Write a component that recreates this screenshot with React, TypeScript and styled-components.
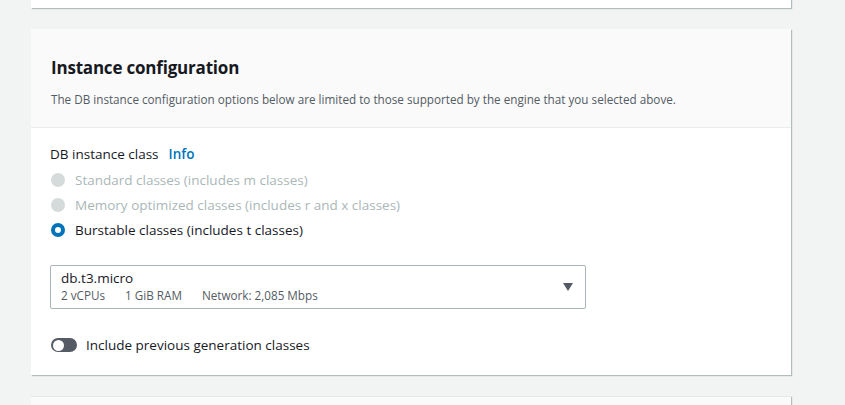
import React from "react";
import styled, { createGlobalStyle } from "styled-components";

const Global = createGlobalStyle`
  html, body { margin: 0; padding: 0; background: #f2f3f3; }
  body { font-family: "Open Sans", "Noto Sans", sans-serif; color: #16191f; }
  * { box-sizing: border-box; }
`;

const Page = styled.div`
  width: 845px;
  height: 415px;
  overflow: hidden;
  display: flex;
  flex-direction: column;
  gap: 21px;
  padding-left: 31px;
  margin-top: -10px;
`;

const Card = styled.div<{ $h?: number }>`
  width: 760px;
  background: #fff;
  box-shadow: 1px 1px 1px 0 rgba(0, 22, 28, 0.25);
  ${(p) => (p.$h ? `height: ${p.$h}px;` : "")}
  flex-shrink: 0;
`;

const NextCard = styled(Card)`
  background: #fafafa;
  border-top: 1px solid #e4e8e8;
  height: 40px;
`;

const Header = styled.div`
  background: #fafafa;
  border-bottom: 1px solid #eaeded;
  padding: 27px 20px 0 20px;
  height: 99px;
`;

const Title = styled.h2`
  margin: 0;
  font-size: 17px;
  font-weight: 700;
  line-height: 24px;
  letter-spacing: -0.2px;
`;

const Desc = styled.p`
  margin: 11px 0 0 0;
  font-size: 11.7px;
  line-height: 16px;
  color: #545b64;
`;

const Body = styled.div`
  padding: 16px 19px 20px 19px;
`;

const Label = styled.div`
  font-size: 13.5px;
  line-height: 20px;
  display: flex;
  gap: 10px;
`;

const Info = styled.span`
  color: #0073bb;
  font-weight: 600;
`;

const RadioList = styled.div`
  display: flex;
  flex-direction: column;
  margin-top: 6px;
  gap: 5px;
`;

const RadioRow = styled.div<{ $disabled?: boolean }>`
  display: flex;
  align-items: center;
  gap: 10px;
  font-size: 13.5px;
  line-height: 20px;
  color: ${(p) => (p.$disabled ? "#aab7b8" : "#16191f")};
`;

const RadioDot = styled.span<{ $state: "disabled" | "checked" }>`
  width: 14px;
  height: 14px;
  margin-left: 1px;
  border-radius: 50%;
  flex-shrink: 0;
  ${(p) =>
    p.$state === "disabled"
      ? "background: #d5dbdb;"
      : "background: #fff; border: 4px solid #0073bb;"}
`;

const Select = styled.div`
  margin-top: 25px;
  width: 536px;
  height: 44px;
  border: 1px solid #aab7b8;
  border-radius: 2px;
  display: flex;
  align-items: center;
  justify-content: space-between;
  padding: 0 12px 0 10px;
`;

const SelectText = styled.div`
  display: flex;
  flex-direction: column;
`;

const SelectMain = styled.div`
  font-size: 13.5px;
  line-height: 17px;
`;

const SelectMeta = styled.div`
  display: flex;
  gap: 20px;
  font-size: 11.7px;
  line-height: 17px;
  color: #545b64;
`;

const Toggle = styled.div`
  margin-top: 26px;
  display: flex;
  align-items: center;
  gap: 9px;
  font-size: 13.5px;
  line-height: 20px;
`;

const Track = styled.span`
  width: 26px;
  height: 14px;
  margin-left: 1px;
  border-radius: 7px;
  background: #545b64;
  display: flex;
  align-items: center;
  padding-left: 1.5px;
`;

const Knob = styled.span`
  width: 11px;
  height: 11px;
  border-radius: 50%;
  background: #fff;
`;

export default function App() {
  return (
    <>
      <Global />
      <Page>
        <Card $h={18} />
        <Card>
          <Header>
            <Title>Instance configuration</Title>
            <Desc>
              The DB instance configuration options below are limited to those supported by the engine that you selected above.
            </Desc>
          </Header>
          <Body>
            <Label>
              DB instance class <Info>Info</Info>
            </Label>
            <RadioList>
              <RadioRow $disabled>
                <RadioDot $state="disabled" />
                Standard classes (includes m classes)
              </RadioRow>
              <RadioRow $disabled>
                <RadioDot $state="disabled" />
                Memory optimized classes (includes r and x classes)
              </RadioRow>
              <RadioRow>
                <RadioDot $state="checked" />
                Burstable classes (includes t classes)
              </RadioRow>
            </RadioList>
            <Select>
              <SelectText>
                <SelectMain>db.t3.micro</SelectMain>
                <SelectMeta>
                  <span>2 vCPUs</span>
                  <span>1 GiB RAM</span>
                  <span>Network: 2,085 Mbps</span>
                </SelectMeta>
              </SelectText>
              <svg width="10" height="8" viewBox="0 0 10 8">
                <path d="M0 0 H10 L5 8 Z" fill="#545b64" />
              </svg>
            </Select>
            <Toggle>
              <Track>
                <Knob />
              </Track>
              Include previous generation classes
            </Toggle>
          </Body>
        </Card>
        <NextCard />
      </Page>
    </>
  );
}
